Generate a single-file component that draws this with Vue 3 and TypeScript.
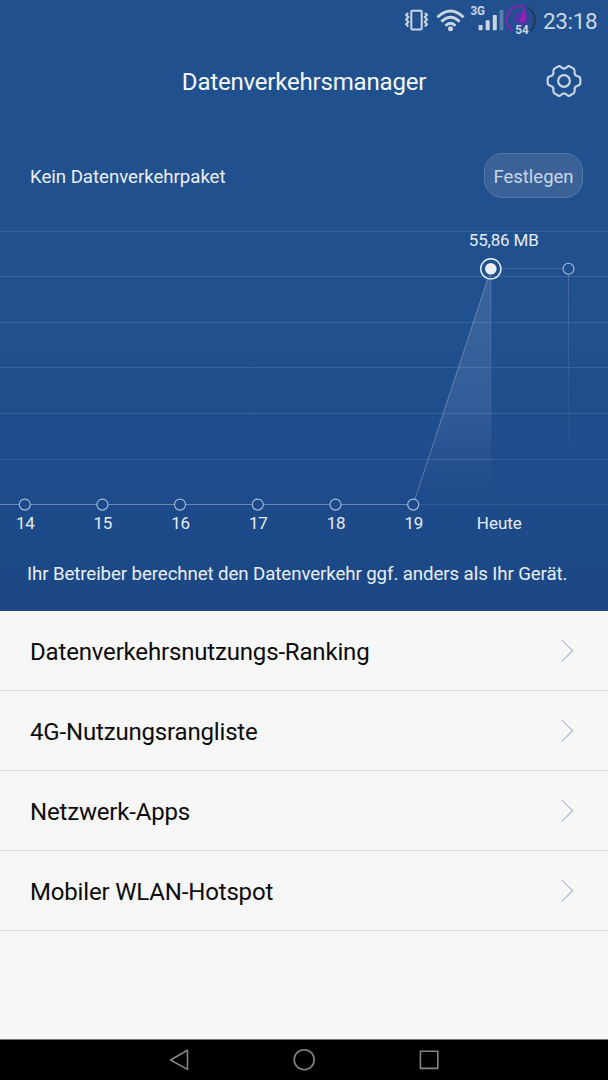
<script setup lang="ts">
interface DayPoint {
  label: string
  x: number
  labelX: number
}

const days: DayPoint[] = [
  { label: '14', x: 24.8, labelX: 25.3 },
  { label: '15', x: 102.4, labelX: 103 },
  { label: '16', x: 180, labelX: 180.7 },
  { label: '17', x: 257.8, labelX: 258.4 },
  { label: '18', x: 335.5, labelX: 336.1 },
  { label: '19', x: 413.2, labelX: 413.8 },
]
const gridLines: number[] = [6.5, 51.5, 97.5, 142.5, 188.5, 234.5]
const entries: string[] = [
  'Datenverkehrsnutzungs-Ranking',
  '4G-Nutzungsrangliste',
  'Netzwerk-Apps',
  'Mobiler WLAN-Hotspot',
]
</script>

<template>
  <div class="screen">
    <section class="hero">
      <div class="status">
        <svg class="status-icons" width="140" height="40" viewBox="398 0 140 40">
          <g fill="none" stroke="#cbd6e5" stroke-width="2">
            <rect x="411.3" y="10.7" width="10.4" height="18.8" rx="1" />
            <path d="M408.3 13l-2.2 1.8 2.2 2.3-2.2 2.4 2.2 2.4-2.2 2.3 2.2 2.3M424.8 13l2.2 1.8-2.2 2.3 2.2 2.4-2.2 2.4 2.2 2.3-2.2 2.3" />
          </g>
          <g fill="none" stroke="#cbd6e5" stroke-width="2.9">
            <path d="M437.4 17.2Q450.5 4.8 463.6 17.2" />
            <path d="M441.4 21.6Q450.5 12.8 459.6 21.6" />
            <path d="M445.5 25.8Q450.5 20.8 455.5 25.8" />
          </g>
          <circle cx="450.5" cy="28.7" r="2.5" fill="#cbd6e5" />
          <text x="470.4" y="15.3" class="network" textLength="14.6" lengthAdjust="spacingAndGlyphs">3G</text>
          <g fill="#cbd6e5">
            <rect x="478.6" y="25" width="4" height="5.2" rx=".6" />
            <rect x="485.7" y="20.3" width="4" height="9.9" rx=".6" />
            <rect x="492.8" y="15" width="4" height="15.2" rx=".6" />
            <rect x="499.6" y="10" width="3.8" height="20.2" rx=".6" opacity=".35" />
          </g>
          <circle cx="521.5" cy="19" r="9" fill="#5430ad" opacity=".4" />
          <circle cx="521.5" cy="18.5" r="5.5" fill="#6b2ab8" opacity=".55" />
          <path d="M512.5 31A14 14 0 0 1 524.5 6.2" fill="none" stroke="#8f20b3" stroke-width="1.8" />
          <path d="M527.3 7.8A14 14 0 0 1 530.5 30.5" fill="none" stroke="#223951" stroke-width="1.8" />
          <path d="M524.8 6L525 21Q522.5 24 520 20.5Z" fill="#9c1eb5" />
          <text x="515.2" y="34" class="battery" textLength="13.4" lengthAdjust="spacingAndGlyphs">54</text>
        </svg>
        <span class="clock">23:18</span>
      </div>

      <header class="title-bar">
        <h1>Datenverkehrsmanager</h1>
        <svg class="gear" width="36" height="36" viewBox="48 25 108 108">
          <g fill="none" stroke="#cbd6e5" stroke-width="6.4" stroke-linejoin="round">
            <path d="M94 38Q102 46 110 38Q114 33 119 35L131 42Q135 46 134 52Q132 62 143 65Q151 67 151 73V85Q151 91 143 93Q132 96 134 106Q135 112 131 116L119 123Q114 125 110 120Q102 112 94 120Q90 125 85 123L73 116Q69 112 70 106Q72 96 61 93Q53 91 53 85V73Q53 67 61 65Q72 62 70 52Q69 46 73 42L85 35Q90 33 94 38Z" />
            <circle cx="102" cy="79" r="17.5" />
          </g>
        </svg>
      </header>

      <div class="plan">
        <span class="plan-text">Kein Datenverkehrpaket</span>
        <button class="set-button">Festlegen</button>
      </div>

      <svg class="chart" width="608" height="325" viewBox="0 0 608 325">
        <defs>
          <linearGradient id="area" x1="0" y1="44" x2="0" y2="270" gradientUnits="userSpaceOnUse">
            <stop offset="0" stop-color="#e4e0ff" stop-opacity=".14" />
            <stop offset=".6" stop-color="#e4e0ff" stop-opacity=".1" />
            <stop offset="1" stop-color="#e4e0ff" stop-opacity="0" />
          </linearGradient>
          <linearGradient id="drop" x1="0" y1="44" x2="0" y2="255" gradientUnits="userSpaceOnUse">
            <stop offset="0" stop-color="#fff" stop-opacity=".3" />
            <stop offset="1" stop-color="#fff" stop-opacity="0" />
          </linearGradient>
        </defs>
        <line v-for="y in gridLines" :key="y" x1="0" :y1="y" x2="608" :y2="y" stroke="#fff" stroke-opacity=".11" />
        <line x1="419" y1="279.5" x2="608" y2="279.5" stroke="#fff" stroke-opacity=".09" />
        <path d="M491 44L413.2 279.5H491Z" fill="url(#area)" />
        <path d="M487.5 54.5L415 274" stroke="#fff" stroke-opacity=".26" />
        <g fill="url(#drop)">
          <rect v-for="n in 100" :key="n" x="490.5" :y="53 + n * 2" width="1" height="1" />
          <rect v-for="n in 100" :key="n + 100" x="568" :y="48 + n * 2" width="1" height="1" />
        </g>
        <path d="M502 43.5H562.5" stroke="#fff" stroke-opacity=".14" />
        <path d="M0 279.5H19M30.5 279.5H96.5M108 279.5H174M186 279.5H252M263.5 279.5H330M341 279.5H407.5" stroke="#fff" stroke-opacity=".34" />
        <g fill="none" stroke="#a9bdd8" stroke-width="1.1">
          <circle v-for="day in days" :key="day.label" :cx="day.x" cy="279.6" r="5.5" />
          <circle cx="568.5" cy="43.8" r="5.5" />
        </g>
        <circle cx="490.8" cy="43.8" r="10.1" fill="none" stroke="#e9eef5" stroke-width="1.4" />
        <circle cx="490.8" cy="43.8" r="5.8" fill="#e9edf4" />
        <g class="chart-text">
          <text x="503.8" y="21.2" textLength="70">55,86 MB</text>
          <text v-for="day in days" :key="day.label" :x="day.labelX" y="304.2" textLength="18.8">{{ day.label }}</text>
          <text x="499.3" y="304.2" textLength="45">Heute</text>
        </g>
      </svg>

      <p class="notice">Ihr Betreiber berechnet den Datenverkehr ggf. anders als Ihr Gerät.</p>
    </section>

    <main class="list">
      <div v-for="entry in entries" :key="entry" class="row">
        <span class="row-label">{{ entry }}</span>
        <svg width="14" height="26" viewBox="0 0 14 26">
          <path d="M1.5 1.7L12.5 12.7L1.5 23.7" fill="none" stroke="#a8b8d3" stroke-width="1.2" />
        </svg>
      </div>
    </main>

    <nav class="nav">
      <svg width="608" height="40" viewBox="0 0 608 40" fill="none" stroke="#858585" stroke-width="1.6" stroke-linejoin="round">
        <path d="M170.5 20L187.5 10.3V29.4Z" />
        <circle cx="304.2" cy="19.7" r="10" />
        <rect x="420.4" y="11.2" width="17.4" height="17.2" />
      </svg>
    </nav>
  </div>
</template>

<style>
body {
  margin: 0;
}
</style>

<style scoped>
.screen {
  width: 608px;
  height: 1080px;
  display: flex;
  flex-direction: column;
  overflow: hidden;
  background: #f7f7f7;
  font-family: Roboto, "Liberation Sans", sans-serif;
}
.hero {
  height: 611px;
  box-sizing: border-box;
  flex-shrink: 0;
  display: flex;
  flex-direction: column;
  background: linear-gradient(#20518e 0, #20508d 55%, #1e4c8d 75%, #1b4884 100%);
  border-bottom: 1px solid #24508d;
  color: #e9eef4;
}
.status {
  height: 40px;
  display: flex;
  justify-content: flex-end;
  padding-right: 10px;
}
.status-icons {
  margin-right: 5px;
}
.network,
.battery {
  fill: #cbd6e5;
  font-size: 12px;
  font-weight: 700;
}
.battery {
  font-size: 12.5px;
}
.clock {
  width: 55px;
  color: #cbd6e5;
  font-size: 22.5px;
  letter-spacing: -0.35px;
  line-height: 42px;
  white-space: nowrap;
}
.title-bar {
  height: 82px;
  display: grid;
  grid-template-columns: 1fr auto 1fr;
  align-items: center;
}
h1 {
  grid-column: 2;
  margin: 0;
  padding-top: 2px;
  font-size: 24px;
  font-weight: 400;
  letter-spacing: -0.19px;
  color: #f5f8fb;
}
.gear {
  justify-self: end;
  margin-right: 26px;
}
.plan {
  height: 103px;
  box-sizing: border-box;
  padding: 31px 25px 0 30px;
  display: flex;
  justify-content: space-between;
  align-items: flex-start;
}
.plan-text {
  font-size: 18.7px;
  letter-spacing: -0.05px;
  line-height: 48px;
}
.set-button {
  width: 99px;
  height: 45px;
  padding: 3px 0 0;
  border: 1px solid #5676a5;
  border-radius: 18px;
  background: #3a6299;
  color: #cbd6e5;
  font: 18.5px/40px Roboto, sans-serif;
}
.chart {
  flex-shrink: 0;
}
.chart-text {
  fill: #e5ebf2;
  font-size: 17px;
  text-anchor: middle;
}
.notice {
  margin: 0 0 0 27px;
  font-size: 18.7px;
  letter-spacing: -0.1px;
  line-height: 48px;
  white-space: nowrap;
}
.list {
  flex: 1;
}
.row {
  height: 80px;
  box-sizing: border-box;
  border-bottom: 1px solid #dedede;
  padding: 0 34px 0 30px;
  display: flex;
  justify-content: space-between;
  align-items: center;
  color: #0b0b0b;
  font-size: 24px;
}
.row-label {
  padding-top: 3px;
  letter-spacing: -0.17px;
}
.nav {
  height: 40px;
  border-top: 1px solid #777;
  background: #000;
}
</style>
